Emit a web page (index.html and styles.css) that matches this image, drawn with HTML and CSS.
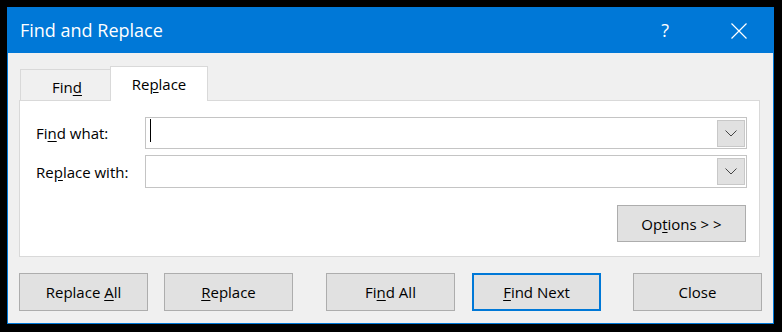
FILE: index.html
```html
<!DOCTYPE html>
<html lang="en">
<head>
    <meta charset="UTF-8">
    <title>Find and Replace</title>
    <link rel="stylesheet" href="styles.css">
</head>
<body>
    <div class="window">
        <div class="titlebar">
            <span class="title">Find and Replace</span>
            <span class="help">?</span>
            <svg class="close-icon" width="16" height="16" viewBox="0 0 16 16">
                <path d="M0.5 0.5 L15.5 15.5 M15.5 0.5 L0.5 15.5" stroke="#fff" stroke-width="1.2" fill="none"/>
            </svg>
        </div>

        <div class="content">
            <div class="tabs">
                <div class="tab">Fin<u>d</u></div>
                <div class="tab active">Re<u>p</u>lace</div>
            </div>

            <div class="panel">
                <div class="field">
                    <label>Fi<u>n</u>d what:</label>
                    <div class="combo">
                        <span class="caret"></span>
                        <span class="drop">
                            <svg width="12" height="7" viewBox="0 0 12 7"><path d="M0.5 0.5 L6 6 L11.5 0.5" stroke="#444" stroke-width="1" fill="none"/></svg>
                        </span>
                    </div>
                </div>
                <div class="field second">
                    <label>Re<u>p</u>lace with:</label>
                    <div class="combo">
                        <span class="drop">
                            <svg width="12" height="7" viewBox="0 0 12 7"><path d="M0.5 0.5 L6 6 L11.5 0.5" stroke="#444" stroke-width="1" fill="none"/></svg>
                        </span>
                    </div>
                </div>
                <div class="options-row">
                    <button class="btn options">Op<u>t</u>ions &gt; &gt;</button>
                </div>
            </div>

            <div class="actions">
                <button class="btn">Replace <u>A</u>ll</button>
                <button class="btn"><u>R</u>eplace</button>
                <button class="btn find-all">Fi<u>n</u>d All</button>
                <button class="btn default"><u>F</u>ind Next</button>
                <button class="btn close">Close</button>
            </div>
        </div>
    </div>
</body>
</html>
```

FILE: styles.css
```css
body {
    margin: 0;
    background: #000;
    font-family: "Open Sans", "Noto Sans", Arial, sans-serif;
    font-size: 15px;
    color: #000;
}
.window {
    margin: 7px 0 0 7px;
    width: 767px;
    height: 317px;
    box-sizing: border-box;
    border: 1px solid #0078d7;
    background: #f0f0f0;
}
.titlebar {
    height: 45px;
    background: #0078d7;
    color: #fff;
    display: flex;
    align-items: center;
    padding: 0 26px 0 12px;
}
.title {
    font-size: 18px;
    flex: 1;
    margin-top: -2px;
}
.help {
    font-size: 18px;
    margin-right: 62px;
    margin-top: -1px;
}
.close-icon {
    display: block;
    margin-top: 1px;
}
.content {
    padding: 13px 11px 0 11px;
}
.tabs {
    display: flex;
    align-items: flex-end;
    padding-left: 1px;
    margin-bottom: -1px;
    position: relative;
    z-index: 1;
}
.tab {
    width: 90px;
    height: 32px;
    box-sizing: border-box;
    border: 1px solid #d9d9d9;
    border-bottom: none;
    border-right: none;
    display: flex;
    align-items: center;
    justify-content: center;
    padding-left: 3px;
    padding-top: 2px;
}
.tab.active {
    width: 98px;
    height: 35px;
    background: #fff;
    border-right: 1px solid #d9d9d9;
    padding-left: 0;
    padding-top: 0;
}
.panel {
    background: #fff;
    border: 1px solid #d9d9d9;
    margin-right: 2px;
    padding: 16px 12px 14px 15px;
}
.field {
    display: flex;
    align-items: center;
}
.field label {
    width: 110px;
    padding-left: 1px;
    box-sizing: border-box;
}
.field.second {
    margin-top: 6px;
}
.combo {
    flex: 1;
    height: 32px;
    box-sizing: border-box;
    border: 1px solid #c4c4c4;
    display: flex;
    align-items: center;
    justify-content: flex-end;
    position: relative;
    padding-right: 1px;
}
.field.second .combo {
    height: 33px;
}
.caret {
    position: absolute;
    left: 4px;
    top: 1px;
    width: 1px;
    height: 23px;
    background: #000;
}
.drop {
    width: 28px;
    height: 27px;
    box-sizing: border-box;
    border: 1px solid #c8c8c8;
    background: #e1e1e1;
    display: flex;
    align-items: center;
    justify-content: center;
}
.options-row {
    display: flex;
    justify-content: flex-end;
    margin-top: 17px;
    padding-right: 1px;
}
.btn {
    width: 129px;
    height: 38px;
    box-sizing: border-box;
    border: 1px solid #adadad;
    background: #e1e1e1;
    font-family: inherit;
    font-size: 15px;
    color: #000;
    padding: 0;
    margin: 0;
}
.btn.options {
    height: 37px;
}
.btn.default {
    border: 2px solid #0078d7;
}
.actions {
    display: flex;
    gap: 16px;
    margin-top: 16px;
}
.actions .find-all {
    margin-left: 17px;
}
.actions .default {
    margin-left: 1px;
}
.actions .close {
    margin-left: 16px;
}
u {
    text-underline-offset: 2px;
}
```
